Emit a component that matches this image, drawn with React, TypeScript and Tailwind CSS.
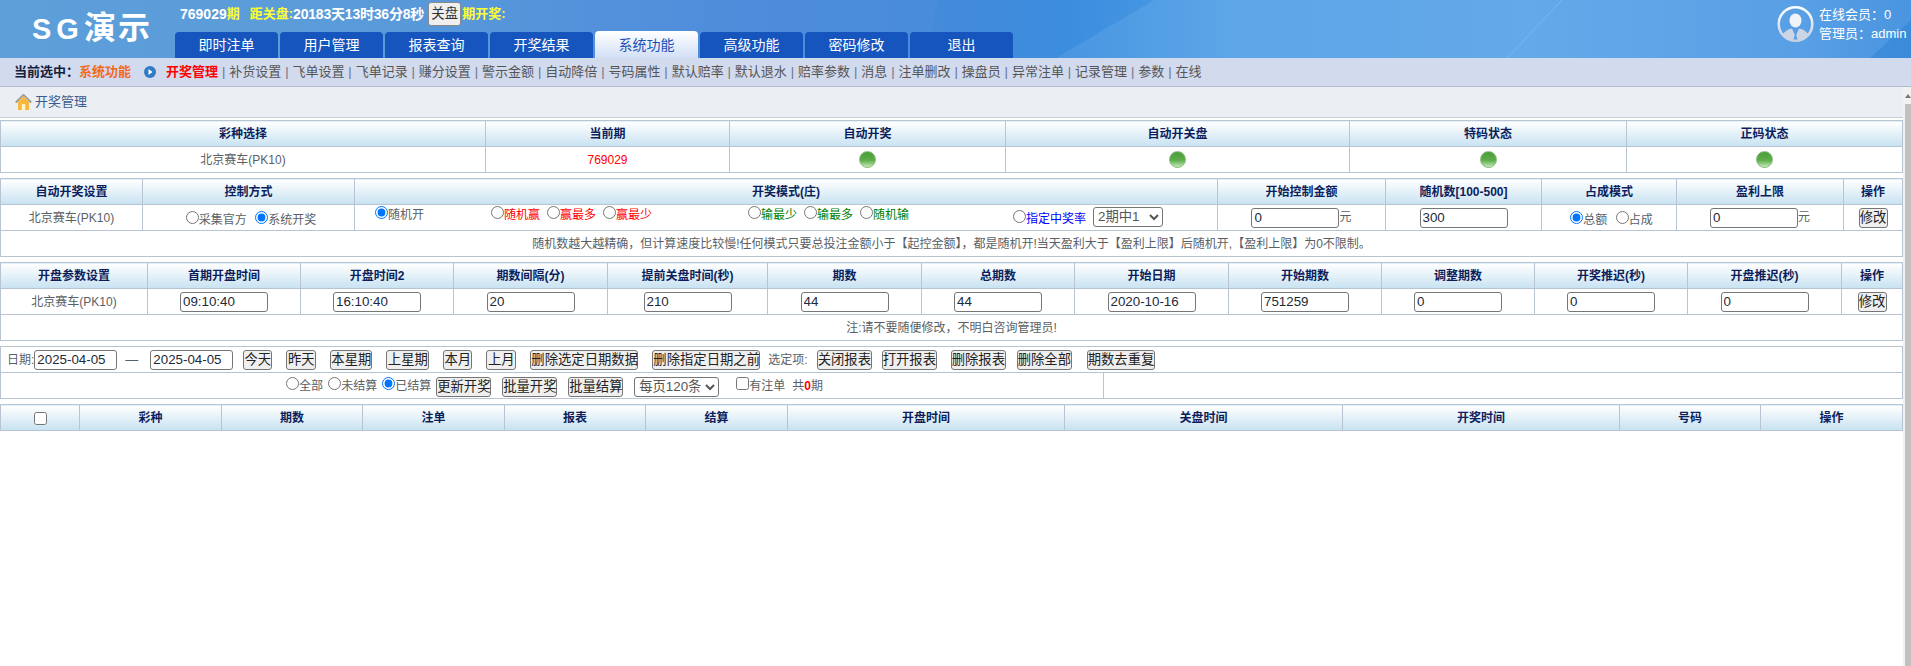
import type { ReactNode } from "react";

const btnCls =
  "h-5 shrink-0 whitespace-nowrap rounded-[3px] border border-[#767676] bg-[#efefef] px-0 align-middle text-[13.33px] leading-none text-[#222]";
const inputCls =
  "h-5 w-[88px] rounded-[3px] border border-[#767676] bg-white pl-[2px] align-middle text-[13.33px] leading-none text-[#1d2a3a]";
const selectCls =
  "h-5 rounded-[3px] border border-[#767676] bg-white align-middle text-[13.33px] leading-none text-[#555]";

function Th({ children, span }: { children?: ReactNode; span?: number }) {
  return (
    <th
      colSpan={span}
      className="h-[26px] border border-[#b9c4d3] bg-linear-to-b from-white to-[#c8e2f2] p-0 text-center align-middle text-xs font-bold text-[#0c1f5c]"
    >
      {children}
    </th>
  );
}

function Td({ children, span }: { children?: ReactNode; span?: number }) {
  return (
    <td
      colSpan={span}
      className="h-[26px] border border-[#b9c4d3] p-0 text-center align-middle text-xs text-[#5a5f66]"
    >
      {children}
    </td>
  );
}

function Radio({ name, label, checked, color }: { name: string; label: string; checked?: boolean; color?: string }) {
  return (
    <label className={"whitespace-nowrap " + (color ?? "")}>
      <input type="radio" name={name} defaultChecked={checked} className="m-[3px_0_0_5px]" />
      {label}
    </label>
  );
}

function Led() {
  return (
    <span className="inline-block h-[17px] w-[17px] rounded-full border border-[#8fbf85] bg-[linear-gradient(180deg,#4a9c3a_0%,#5dad49_55%,#c6e8bb_100%)] align-middle" />
  );
}

function NumInput({ value, w }: { value: string; w?: string }) {
  return <input type="text" defaultValue={value} className={w ? inputCls.replace("w-[88px]", w) : inputCls} />;
}

function House() {
  return (
    <svg width="17" height="17" viewBox="0 0 17 17">
      <path d="M3 8 L8.5 3 L14 8 V16 H3 Z" fill="#f6b83a" />
      <rect x="6.8" y="10" width="3.4" height="6" fill="#fff3c9" />
      <path d="M0.8 8.5 L8.5 1 L16.2 8.5" fill="none" stroke="#8a9aaa" strokeWidth="2" />
      <path d="M1.5 8.2 L8.5 1.6 L15.5 8.2" fill="none" stroke="#e8a23a" strokeWidth="1" />
    </svg>
  );
}

function Avatar() {
  return (
    <svg width="37" height="38" viewBox="0 0 37 38">
      <defs>
        <linearGradient id="ring" x1="0" y1="0" x2="0" y2="1">
          <stop offset="0" stopColor="#ffffff" />
          <stop offset="1" stopColor="#c3cfe0" />
        </linearGradient>
      </defs>
      <circle cx="18.5" cy="19" r="16.8" fill="none" stroke="url(#ring)" strokeWidth="2.6" />
      <ellipse cx="18.5" cy="15.5" rx="6" ry="7" fill="#f0f3f8" />
      <path d="M5 30 C9 25 12 24 15 23.5 L17.8 30 L16 36 C11 35.5 7.5 33.5 5 30 Z" fill="#ccd5e4" />
      <path d="M32 30 C28 25 25 24 22 23.5 L19.2 30 L21 36 C26 35.5 29.5 33.5 32 30 Z" fill="#ccd5e4" />
    </svg>
  );
}

const tabs = ["即时注单", "用户管理", "报表查询", "开奖结果", "系统功能", "高级功能", "密码修改", "退出"];
const subLinks = [
  "补货设置", "飞单设置", "飞单记录", "赚分设置", "警示金额", "自动降倍", "号码属性", "默认赔率", "默认退水",
  "赔率参数", "消息", "注单删改", "操盘员", "异常注单", "记录管理", "参数", "在线",
];

const statusCols = [
  { w: "w-[485px]", t: "彩种选择" },
  { w: "w-[244px]", t: "当前期" },
  { w: "w-[276px]", t: "自动开奖" },
  { w: "w-[344px]", t: "自动开关盘" },
  { w: "w-[277px]", t: "特码状态" },
  { w: "", t: "正码状态" },
];
const autoCols = ["w-[142px]", "w-[212px]", "w-[863px]", "w-[168px]", "w-[156px]", "w-[135px]", "w-[167px]", ""];
const paramCols = [
  { w: "w-[147px]", t: "开盘参数设置" },
  { w: "w-[153px]", t: "首期开盘时间" },
  { w: "w-[153px]", t: "开盘时间2" },
  { w: "w-[154px]", t: "期数间隔(分)" },
  { w: "w-[160px]", t: "提前关盘时间(秒)" },
  { w: "w-[154px]", t: "期数" },
  { w: "w-[153px]", t: "总期数" },
  { w: "w-[154px]", t: "开始日期" },
  { w: "w-[153px]", t: "开始期数" },
  { w: "w-[153px]", t: "调整期数" },
  { w: "w-[153px]", t: "开奖推迟(秒)" },
  { w: "w-[154px]", t: "开盘推迟(秒)" },
  { w: "", t: "操作" },
];
const paramValues = ["09:10:40", "16:10:40", "20", "210", "44", "44", "2020-10-16", "751259", "0", "0", "0"];
const listCols = [
  { w: "w-[79px]", t: "" },
  { w: "w-[142px]", t: "彩种" },
  { w: "w-[141px]", t: "期数" },
  { w: "w-[142px]", t: "注单" },
  { w: "w-[141px]", t: "报表" },
  { w: "w-[142px]", t: "结算" },
  { w: "w-[277px]", t: "开盘时间" },
  { w: "w-[278px]", t: "关盘时间" },
  { w: "w-[277px]", t: "开奖时间" },
  { w: "w-[141px]", t: "号码" },
  { w: "", t: "操作" },
];

export default function App() {
  return (
    <div className="h-[666px] w-[1911px] overflow-hidden bg-white font-['Liberation_Sans','Noto_Sans_CJK_SC',sans-serif]">
      {/* Header */}
      <header className="relative flex h-[58px] bg-[linear-gradient(90deg,#5d9fd9_0%,#5a9bd9_18%,#4f8ddb_38%,#4a8cdc_48%,#3f90e0_56%,#52a0e6_64%,#5ba4e8_80%,#4f9ae4_94%,#3f8fdf_100%)]">
        <svg className="absolute inset-0 h-full w-full" viewBox="0 0 1911 58" preserveAspectRatio="none">
          <polygon points="1154,0 1911,0 1911,58 1056,58" fill="#ffffff" opacity="0.06" />
          <polygon points="938,0 1154,0 1056,58 925,58" fill="#1f6fd0" opacity="0.08" />
          <line x1="1562" y1="0" x2="1507" y2="58" stroke="#ffffff" strokeWidth="1" opacity="0.18" />
          <polygon points="1911,20 1911,58 1870,58" fill="#1f78d0" opacity="0.35" />
        </svg>
        <div className="relative w-[175px] pl-[32px] pt-[10px] text-[32px] font-bold leading-9 tracking-[2px] text-white">
          <span className="text-[29px] tracking-[5px]">SG</span>
          演示
        </div>
        <div className="relative flex flex-col">
          <div className="flex h-[32px] items-center whitespace-nowrap pb-[4px] pl-[5px] text-sm font-bold text-white">
            769029<span className="text-[13px] text-[#ffff33]">期</span>
            <span className="ml-[10px] text-[13px] text-[#ffff33]">距关盘:</span>
            <span className="tracking-[-0.2px]">20183天13时36分8秒</span>
            <button className="ml-[4px] mr-[1px] h-6 w-[33px] rounded-[3px] border border-[#8a8a8a] bg-[#efefef] text-[13.33px] font-normal leading-none text-[#333]">
              关盘
            </button>
            <span className="text-[13px] text-[#ffff33]">期开奖:</span>
          </div>
          <nav className="flex gap-[2px]">
            {tabs.map((t) =>
              t === "系统功能" ? (
                <a key={t} className="-mt-[1px] flex h-[27px] w-[103px] items-center justify-center rounded-t-[4px] bg-linear-to-b from-white to-[#d2dff6] text-sm text-[#1a50b8]">
                  {t}
                </a>
              ) : (
                <a key={t} className="flex h-[26px] w-[103px] items-center justify-center rounded-t-[4px] bg-[#1655bd] text-sm text-white">
                  {t}
                </a>
              ),
            )}
          </nav>
        </div>
        <div className="relative ml-auto flex w-[134px] items-start pt-[5px] text-[13px] leading-[19px] text-white">
          <Avatar />
          <div className="ml-[5px] whitespace-nowrap">
            <div>在线会员：0</div>
            <div>管理员：admin</div>
          </div>
        </div>
      </header>

      {/* Current section links */}
      <div className="flex h-[29px] items-center whitespace-nowrap border-b border-[#b4bcc9] bg-[#d2daee] pl-[14px] text-[13px] text-[#555]">
        <span className="font-bold text-[#14213d]">当前选中：</span>
        <span className="font-bold text-[#f26a1b]">系统功能</span>
        <svg className="ml-[13px]" width="12" height="12" viewBox="0 0 12 12">
          <circle cx="6" cy="6" r="6" fill="#2f7cc4" />
          <path d="M4.5 3 L8.5 6 L4.5 9 Z" fill="#fff" />
        </svg>
        <span className="ml-[10px] font-bold text-[#f00]">开奖管理</span>
        {subLinks.map((l) => (
          <span key={l} className="flex items-center">
            <span className="w-[11.2px] text-center text-[#6b7488]">|</span>
            {l}
          </span>
        ))}
      </div>

      <div className="flex h-[580px]">
        <main className="w-[1903px] shrink-0">
          {/* Breadcrumb */}
          <div className="flex h-[31px] items-center gap-[3px] border-b border-[#c6ced8] bg-[#ebeef2] pl-[15px] text-[13px] text-[#3d5c8e]">
            <House />
            开奖管理
          </div>

          {/* Status */}
          <table className="mt-[2px] w-full table-fixed">
            <colgroup>
              {statusCols.map((c) => (
                <col key={c.t} className={c.w} />
              ))}
            </colgroup>
            <tbody>
              <tr>
                {statusCols.map((c) => (
                  <Th key={c.t}>{c.t}</Th>
                ))}
              </tr>
              <tr>
                <Td>北京赛车(PK10)</Td>
                <Td>
                  <span className="text-[#f00]">769029</span>
                </Td>
                {[0, 1, 2, 3].map((i) => (
                  <Td key={i}>
                    <Led />
                  </Td>
                ))}
              </tr>
            </tbody>
          </table>

          {/* Auto draw settings */}
          <table className="mt-[5px] w-full table-fixed">
            <colgroup>
              {autoCols.map((w, i) => (
                <col key={i} className={w} />
              ))}
            </colgroup>
            <tbody>
              <tr>
                <Th>自动开奖设置</Th>
                <Th>控制方式</Th>
                <Th>开奖模式(庄)</Th>
                <Th>开始控制金额</Th>
                <Th>随机数[100-500]</Th>
                <Th>占成模式</Th>
                <Th>盈利上限</Th>
                <Th>操作</Th>
              </tr>
              <tr>
                <Td>北京赛车(PK10)</Td>
                <Td>
                  <Radio name="ctl" label="采集官方" /> <Radio name="ctl" label="系统开奖" checked />
                </Td>
                <Td>
                  <div className="-mt-[4px] flex h-[25px] pl-[15px] text-left">
                    <div className="w-[116px]">
                      <Radio name="mode" label="随机开" checked />
                    </div>
                    <div className="flex w-[257px]">
                      <div className="w-[56px] shrink-0"><Radio name="mode" label="随机赢" color="text-[#f00]" /></div>
                      <div className="w-[56px] shrink-0"><Radio name="mode" label="赢最多" color="text-[#f00]" /></div>
                      <div className="w-[56px] shrink-0"><Radio name="mode" label="赢最少" color="text-[#f00]" /></div>
                    </div>
                    <div className="flex w-[265px]">
                      <div className="w-[56px] shrink-0"><Radio name="mode" label="输最少" color="text-[#008000]" /></div>
                      <div className="w-[56px] shrink-0"><Radio name="mode" label="输最多" color="text-[#008000]" /></div>
                      <div className="w-[56px] shrink-0"><Radio name="mode" label="随机输" color="text-[#008000]" /></div>
                    </div>
                    <div className="mt-[2px] flex items-center whitespace-nowrap">
                      <Radio name="mode" label="指定中奖率" color="text-[#00f]" />
                      <select defaultValue="2期中1" className={selectCls + " ml-[7px] w-[70px]"}>
                        <option>2期中1</option>
                      </select>
                    </div>
                  </div>
                </Td>
                <Td>
                  <NumInput value="0" />元
                </Td>
                <Td>
                  <NumInput value="300" />
                </Td>
                <Td>
                  <Radio name="share" label="总额" checked /> <Radio name="share" label="占成" />
                </Td>
                <Td>
                  <NumInput value="0" />元
                </Td>
                <Td>
                  <button className={btnCls + " w-[29px]"}>修改</button>
                </Td>
              </tr>
              <tr>
                <Td span={8}>
                  随机数越大越精确，但计算速度比较慢!任何模式只要总投注金额小于【起控金额】，都是随机开!当天盈利大于【盈利上限】后随机开,【盈利上限】为0不限制。
                </Td>
              </tr>
            </tbody>
          </table>

          {/* Open parameters */}
          <table className="mt-[5px] w-full table-fixed">
            <colgroup>
              {paramCols.map((c) => (
                <col key={c.t} className={c.w} />
              ))}
            </colgroup>
            <tbody>
              <tr>
                {paramCols.map((c) => (
                  <Th key={c.t}>{c.t}</Th>
                ))}
              </tr>
              <tr>
                <Td>北京赛车(PK10)</Td>
                {paramValues.map((v, i) => (
                  <Td key={i}>
                    <NumInput value={v} />
                  </Td>
                ))}
                <Td>
                  <button className={btnCls + " w-[29px]"}>修改</button>
                </Td>
              </tr>
              <tr>
                <Td span={13}>注:请不要随便修改，不明白咨询管理员!</Td>
              </tr>
            </tbody>
          </table>

          {/* Filters */}
          <table className="mt-[5px] w-full table-fixed">
            <colgroup>
              <col className="w-[1103px]" />
              <col />
            </colgroup>
            <tbody>
              <tr>
                <Td span={2}>
                  <div className="flex items-center whitespace-nowrap pl-[6px]">
                    日期:
                    <NumInput value="2025-04-05" w="w-[83px]" />
                    <span className="ml-[8px] mr-[9px] text-[13px]">—</span>
                    <NumInput value="2025-04-05" w="ml-[3px] w-[83px]" />
                    <button className={btnCls + " ml-[10px] w-[29px]"}>今天</button>
                    <button className={btnCls + " ml-[14px] w-[30px]"}>昨天</button>
                    <button className={btnCls + " ml-[14px] w-[42px]"}>本星期</button>
                    <button className={btnCls + " ml-[14px] w-[43px]"}>上星期</button>
                    <button className={btnCls + " ml-[14px] w-[29px]"}>本月</button>
                    <button className={btnCls + " ml-[14px] w-[30px]"}>上月</button>
                    <button className={btnCls + " ml-[14px] w-[108px]"}>删除选定日期数据</button>
                    <button className={btnCls + " ml-[14px] w-[108px]"}>删除指定日期之前</button>
                    <span className="ml-[8px]">选定项:</span>
                    <button className={btnCls + " ml-[9px] w-[55px]"}>关闭报表</button>
                    <button className={btnCls + " ml-[10px] w-[55px]"}>打开报表</button>
                    <button className={btnCls + " ml-[14px] w-[55px]"}>删除报表</button>
                    <button className={btnCls + " ml-[11px] w-[55px]"}>删除全部</button>
                    <button className={btnCls + " ml-[15px] w-[68px]"}>期数去重复</button>
                  </div>
                </Td>
              </tr>
              <tr>
                <Td>
                  <Radio name="st" label="全部" />
                  <Radio name="st" label="未结算" />
                  <Radio name="st" label="已结算" checked />
                  <button className={btnCls + " ml-[5px] w-[55px]"}>更新开奖</button>
                  <button className={btnCls + " ml-[11px] w-[55px]"}>批量开奖</button>
                  <button className={btnCls + " ml-[11px] w-[55px]"}>批量结算</button>
                  <select defaultValue="每页120条" className={selectCls + " ml-[11px] w-[85px]"}>
                    <option>每页120条</option>
                  </select>
                  <label className="ml-[12px]">
                    <input type="checkbox" className="m-[3px_0_0_5px]" />
                    有注单
                  </label>
                  <span className="ml-[7px]">
                    共<b className="text-[#f00]">0</b>期
                  </span>
                </Td>
                <Td />
              </tr>
            </tbody>
          </table>

          {/* Draw list */}
          <table className="mt-[5px] w-full table-fixed">
            <colgroup>
              {listCols.map((c) => (
                <col key={c.t} className={c.w} />
              ))}
            </colgroup>
            <tbody>
              <tr>
                {listCols.map((c, i) => (
                  <Th key={c.t}>{i === 0 ? <input type="checkbox" className="align-middle" /> : c.t}</Th>
                ))}
              </tr>
            </tbody>
          </table>
        </main>

        {/* Scrollbar */}
        <aside className="flex flex-1 flex-col items-end bg-[#f1f1f1]">
          <div className="flex h-[17px] w-[6px] items-center justify-center">
            <span className="border-x-[3px] border-b-[4px] border-x-transparent border-b-[#777]" />
          </div>
          <div className="w-[6px] flex-1 bg-[#c1c1c1]" />
        </aside>
      </div>
    </div>
  );
}
